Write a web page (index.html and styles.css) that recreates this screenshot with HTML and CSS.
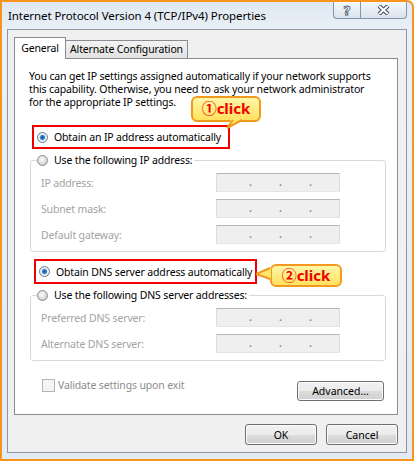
FILE: index.html
```html
<!DOCTYPE html>
<html lang="en">
<head>
    <meta charset="UTF-8">
    <meta name="viewport" content="width=device-width, initial-scale=1.0">
    <title>Internet Protocol Version 4 (TCP/IPv4) Properties</title>
    <link rel="stylesheet" href="styles.css">
</head>
<body>

    <div class="frame">
        <div class="titlebar">
            <span class="title">Internet Protocol Version 4 (TCP/IPv4) Properties</span>
            <div class="caption">
                <span class="cap-btn help">?</span>
                <span class="cap-btn close">
                    <svg width="13" height="10" viewBox="0 0 13 10">
                        <path d="M2 1 L11 9 M11 1 L2 9" stroke="#48566a" stroke-width="4.2" fill="none"/>
                        <path d="M2.3 1.3 L10.7 8.7 M10.7 1.3 L2.3 8.7" stroke="#fff" stroke-width="2" fill="none"/>
                    </svg>
                </span>
            </div>
        </div>

        <div class="client">
            <div class="tabs">
                <div class="tab active">General</div>
                <div class="tab">Alternate Configuration</div>
            </div>

            <div class="panel">
                <p class="intro">You can get IP settings assigned automatically if your network supports<br>this capability. Otherwise, you need to ask your network administrator<br>for the appropriate IP settings.</p>

                <div class="choice marked first">
                    <span class="radio checked"></span>Obtain an IP address automatically
                    <div class="callout callout-up">①click
                        <svg class="tail tail-down" width="20" height="12" viewBox="0 0 20 12">
                            <polygon points="7,0 18,0 2,10" fill="#ffe76e"/>
                            <polyline points="8,2 2,10 17,2" fill="none" stroke="#f29a1f" stroke-width="2"/>
                        </svg>
                    </div>
                </div>

                <fieldset class="group">
                    <legend><span class="choice"><span class="radio"></span>Use the following IP address:</span></legend>
                    <div class="field"><span class="field-label">IP address:</span><span class="ipbox"><i>.</i><i>.</i><i>.</i></span></div>
                    <div class="field"><span class="field-label">Subnet mask:</span><span class="ipbox"><i>.</i><i>.</i><i>.</i></span></div>
                    <div class="field"><span class="field-label">Default gateway:</span><span class="ipbox"><i>.</i><i>.</i><i>.</i></span></div>
                </fieldset>

                <div class="choice marked second">
                    <span class="radio checked"></span>Obtain DNS server address automatically
                    <div class="callout callout-right">②click
                        <svg class="tail tail-left" width="16" height="13" viewBox="0 0 16 13">
                            <polygon points="15,1 15,12 0,7" fill="#ffe76e"/>
                            <polyline points="14,1 0,7 14,12" fill="none" stroke="#f29a1f" stroke-width="2"/>
                        </svg>
                    </div>
                </div>

                <fieldset class="group">
                    <legend><span class="choice"><span class="radio"></span>Use the following DNS server addresses:</span></legend>
                    <div class="field"><span class="field-label">Preferred DNS server:</span><span class="ipbox"><i>.</i><i>.</i><i>.</i></span></div>
                    <div class="field"><span class="field-label">Alternate DNS server:</span><span class="ipbox"><i>.</i><i>.</i><i>.</i></span></div>
                </fieldset>

                <div class="panel-foot">
                    <label class="check"><span class="box"></span>Validate settings upon exit</label>
                    <button class="btn advanced">Advanced...</button>
                </div>
            </div>

            <div class="actions">
                <button class="btn">OK</button>
                <button class="btn">Cancel</button>
            </div>
        </div>
    </div>

</body>
</html>
```

FILE: styles.css
```css
body {
    margin: 0;
    font-family: "Noto Sans", sans-serif;
    font-size: 10.5px;
    letter-spacing: -0.15px;
    color: #000;
}
.frame {
    width: 414px;
    height: 461px;
    box-sizing: border-box;
    border: 2px solid #f7941d;
    border-radius: 0 7px 0 0;
    background: linear-gradient(180deg, #dfe8f2 0, #eaf0f7 30px, #e2eaf3 100%);
    display: flex;
    flex-direction: column;
    overflow: hidden;
}
.titlebar {
    height: 27px;
    flex: none;
    display: flex;
    justify-content: space-between;
    align-items: flex-start;
    padding: 0 5px 0 6px;
}
.title {
    font-size: 11.5px;
    letter-spacing: -0.08px;
    line-height: 14px;
    margin-top: 7px;
    white-space: nowrap;
}
.caption {
    display: flex;
}
.cap-btn {
    height: 17px;
    box-sizing: border-box;
    display: flex;
    align-items: center;
    justify-content: center;
    border: 1px solid #8596ab;
    border-top: 0;
    background: linear-gradient(#f6f9fc, #e6edf4 50%, #dae3ed);
}
.help {
    width: 27px;
    border-right: 0;
    border-radius: 0 0 0 4px;
    font: bold 13px "DejaVu Sans", sans-serif;
    color: #fff;
    -webkit-text-stroke: 0.8px #4a586b;
}
.close {
    width: 47px;
    border-radius: 0 0 4px 0;
}
.client {
    flex: 1;
    margin: 0 5px 6px;
    border: 1px solid #8d96a1;
    background: #f0f0f0;
    padding: 7px 8px 0 6px;
}
.tabs {
    display: flex;
    align-items: flex-end;
    height: 21px;
}
.tab {
    height: 18px;
    box-sizing: border-box;
    width: 123px;
    margin-left: -1px;
    text-align: center;
    white-space: nowrap;
    line-height: 16px;
    border: 1px solid #898c95;
    border-bottom: 0;
    background: linear-gradient(#f3f3f3, #e1e1e1);
}
.tab.active {
    width: 52px;
    height: 22px;
    margin-left: 0;
    margin-bottom: -1px;
    line-height: 20px;
    background: #fff;
    position: relative;
    z-index: 1;
}
.panel {
    height: 357px;
    box-sizing: border-box;
    border: 1px solid #898c95;
    background: #fff;
    padding: 11px 11px 0 15px;
}
.intro {
    margin: 0 0 16px -1px;
    line-height: 13px;
    white-space: nowrap;
}
.choice {
    display: flex;
    align-items: center;
    gap: 6px;
    line-height: 14px;
    white-space: nowrap;
}
.marked {
    position: relative;
    width: fit-content;
    height: 24px;
    box-sizing: border-box;
    border: 2px solid #f20000;
    padding: 0 7px 0 3px;
}
.marked.first {
    margin-left: 2px;
}
.marked.second {
    margin: 7px 0 0 4px;
    height: 25px;
    padding-right: 3px;
}
.radio {
    width: 11px;
    height: 11px;
    box-sizing: border-box;
    border-radius: 50%;
    border: 1px solid #8c8c8c;
    background: radial-gradient(circle at 45% 40%, #fafafa 0, #e6e6e6 3px, #cfcfcf 5px);
    flex: none;
}
.radio.checked {
    border-color: #6d7f92;
    background: radial-gradient(circle, #0d4c8e 0, #3d86cc 2px, #7fb1df 2.6px, #eef2f6 3.2px, #f2f2f2 4px, #cdd3d9 5px);
}
.group {
    margin: 4px 0 0;
    padding: 6px 0 7px 6px;
    border: 1px solid #d3dae1;
    border-radius: 3px;
}
.group legend {
    padding: 0 2px 0 0;
}
.field {
    display: flex;
    align-items: center;
    height: 19px;
    padding-left: 4px;
}
.field + .field {
    margin-top: 7px;
}
.field-label {
    width: 175px;
    color: #a3a3a3;
}
.ipbox {
    width: 124px;
    height: 19px;
    box-sizing: border-box;
    border: 1px solid;
    border-color: #b3b6bb #d9dce1 #e2e5e9 #d9dce1;
    background: #efefef;
    display: flex;
    align-items: flex-end;
    gap: 28px;
    padding: 0 0 3px 32px;
    color: #7f8fa0;
    line-height: 11px;
}
.ipbox i {
    width: 2px;
    font-style: normal;
    font-weight: bold;
}
.panel-foot {
    display: flex;
    justify-content: space-between;
    align-items: flex-start;
    margin-top: 17px;
    padding: 0 2px 0 12px;
}
.check {
    display: flex;
    align-items: center;
    gap: 3px;
    color: #8d8d8d;
    line-height: 15px;
}
.box {
    width: 13px;
    height: 13px;
    box-sizing: border-box;
    border: 1px solid #b4b4b4;
    background: #f4f4f4;
}
.btn {
    font: inherit;
    color: #000;
    width: 72px;
    height: 21px;
    padding: 0;
    border: 1px solid #707070;
    border-radius: 3px;
    background: linear-gradient(#f2f2f2 0, #ebebeb 50%, #dddddd 50%, #cfcfcf 100%);
    box-shadow: inset 0 0 0 1px #fbfbfb;
}
.advanced {
    width: 87px;
    height: 20px;
    margin-top: 3px;
}
.actions {
    display: flex;
    justify-content: flex-end;
    gap: 9px;
    margin-top: 9px;
}
.callout {
    position: absolute;
    box-sizing: border-box;
    border: 2px solid #f29a1f;
    border-radius: 6px;
    background: linear-gradient(#fff7a8, #ffe25e);
    color: #f20000;
    font: bold 15px "Noto Sans", "Noto Sans CJK JP", sans-serif;
    letter-spacing: 0;
    white-space: nowrap;
    text-align: center;
}
.callout-up {
    left: 157px;
    top: -31px;
    width: 70px;
    height: 26px;
    line-height: 21px;
}
.callout-right {
    left: 234px;
    top: 3px;
    width: 72px;
    height: 23px;
    line-height: 19px;
}
.tail {
    position: absolute;
}
.tail-down {
    left: 32px;
    top: 20px;
}
.tail-left {
    left: -16px;
    top: 1px;
}
```
